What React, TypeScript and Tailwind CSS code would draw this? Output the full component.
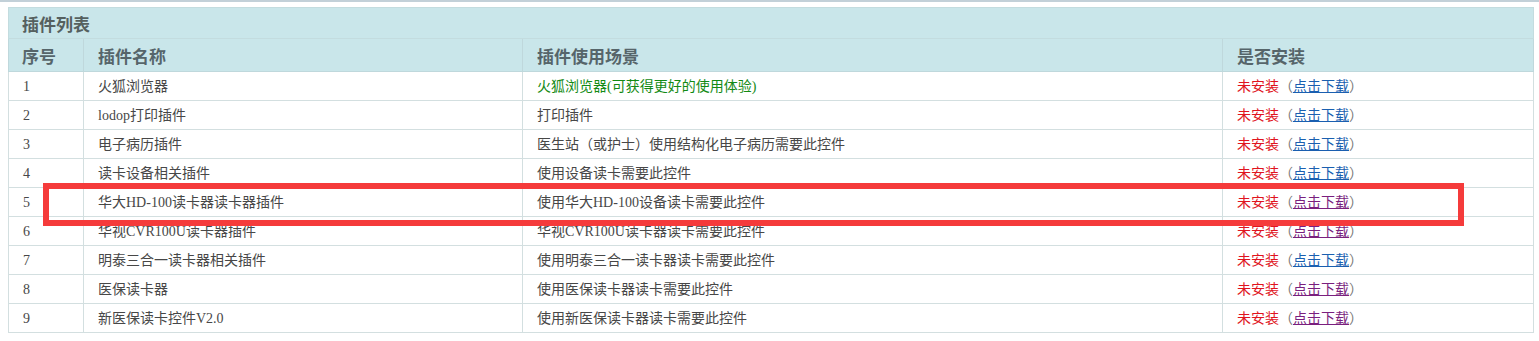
import React from "react";

type Row = { n: number; name: string; scene: string; green?: boolean; visited?: boolean };

const rows: Row[] = [
  { n: 1, name: "火狐浏览器", scene: "火狐浏览器(可获得更好的使用体验)", green: true },
  { n: 2, name: "lodop打印插件", scene: "打印插件" },
  { n: 3, name: "电子病历插件", scene: "医生站（或护士）使用结构化电子病历需要此控件" },
  { n: 4, name: "读卡设备相关插件", scene: "使用设备读卡需要此控件" },
  { n: 5, name: "华大HD-100读卡器读卡器插件", scene: "使用华大HD-100设备读卡需要此控件", visited: true },
  { n: 6, name: "华视CVR100U读卡器插件", scene: "华视CVR100U读卡器读卡需要此控件", visited: true },
  { n: 7, name: "明泰三合一读卡器相关插件", scene: "使用明泰三合一读卡器读卡需要此控件" },
  { n: 8, name: "医保读卡器", scene: "使用医保读卡器读卡需要此控件", visited: true },
  { n: 9, name: "新医保读卡控件V2.0", scene: "使用新医保读卡器读卡需要此控件", visited: true },
];

const font = { fontFamily: '"Liberation Serif", "Noto Sans CJK SC", serif' };
const headFont = { fontFamily: '"Noto Sans CJK SC", sans-serif' };

export default function App() {
  return (
    <div className="w-[1539px] h-[341px] bg-white relative" style={font}>
      <div className="h-[2px] bg-[#c2d0d8]" />
      <div className="pl-[8px] pr-[6px] pt-[5px]">
        <table className="w-[1525px] border-collapse table-fixed text-[14px] text-[#474747]">
          <colgroup>
            <col className="w-[75px]" />
            <col className="w-[439px]" />
            <col className="w-[700px]" />
            <col className="w-[311px]" />
          </colgroup>
          <thead>
            <tr className="h-[31px] bg-[#c9e6ea]">
              <th
                colSpan={4}
                className="border border-[#c3dcdf] text-left pl-[13px] text-[17px] font-bold text-[#55605f] leading-none"
                style={headFont}
              >
                插件列表
              </th>
            </tr>
            <tr className="h-[33px] bg-[#c9e6ea] text-[17px] font-bold text-[#56656a] leading-none" style={headFont}>
              <th className="border border-[#bfd8dc] text-left pl-[13px]">序号</th>
              <th className="border border-[#bfd8dc] text-left pl-[14px]">插件名称</th>
              <th className="border border-[#bfd8dc] text-left pl-[14px]">插件使用场景</th>
              <th className="border border-[#bfd8dc] text-left pl-[14px]">是否安装</th>
            </tr>
          </thead>
          <tbody>
            {rows.map((r) => (
              <tr key={r.n} className="h-[29px] leading-[16px]">
                <td className="border border-[#d3dfe0] pl-[14px] pt-[1px]">{r.n}</td>
                <td className="border border-[#d3dfe0] pl-[14px] pt-[1px]">{r.name}</td>
                <td className={`border border-[#d3dfe0] pl-[14px] pt-[1px] ${r.green ? "text-[#138a13]" : ""}`}>{r.scene}</td>
                <td className="border border-[#d3dfe0] pl-[14px] pt-[1px]">
                  <span className="text-[#e0141e]">未安装</span>
                  <span className="text-[#777]">（</span>
                  <a
                    href="#"
                    className={`underline ${r.visited ? "text-[#7a1f7e]" : "text-[#1a5fb0]"}`}
                  >
                    点击下载
                  </a>
                  <span className="text-[#777]">）</span>
                </td>
              </tr>
            ))}
          </tbody>
        </table>
      </div>
      <div className="absolute left-[43px] top-[183px] w-[1421px] h-[43px] border-[6px] border-[#f53b3b]" />
    </div>
  );
}
